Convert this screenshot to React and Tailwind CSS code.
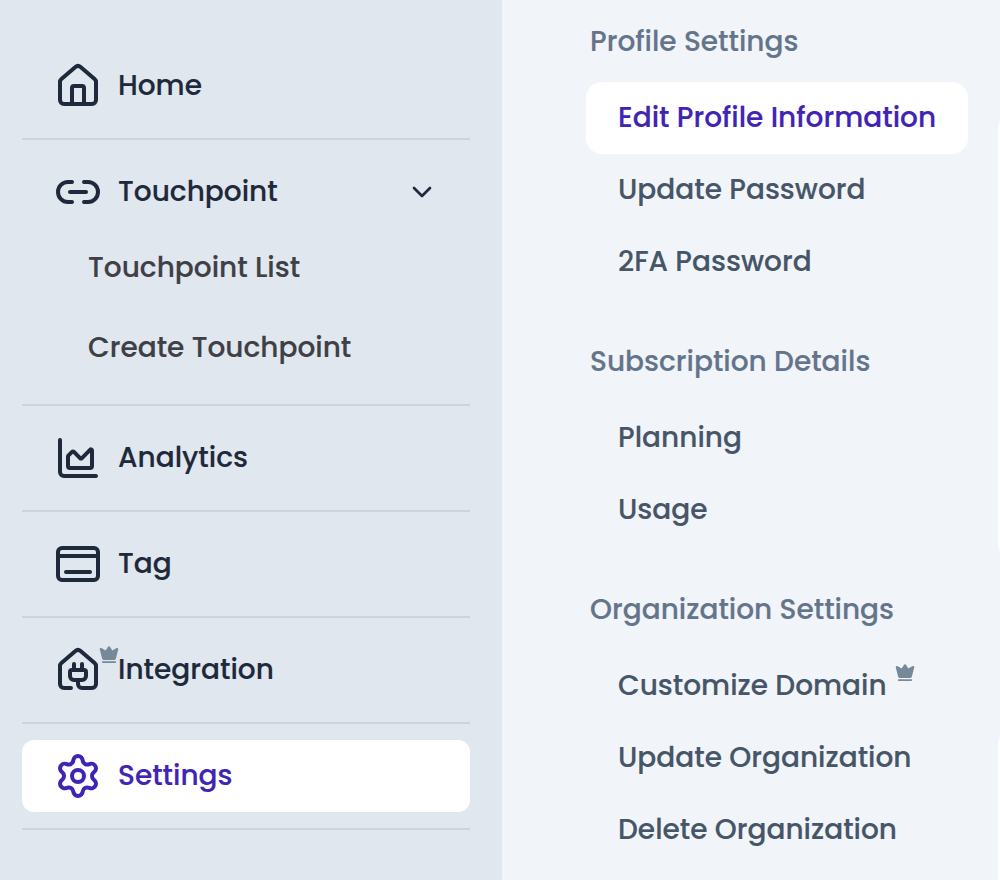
import React from "react";
import { House, Link2, ChartArea, Dock, HousePlug, Settings, ChevronDown } from "lucide-react";

function Crown({ className }) {
  return (
    <svg viewBox="0 0 20 18" className={className} fill="currentColor">
      <path d="M8.7 1.2Q10 -.8 11.3 1.2L13.3 4.6 17.2 2.2Q19.6 1.4 19.2 3.6L16.9 12.6Q16.6 13.9 15.4 13.9H4.6Q3.4 13.9 3.1 12.6L.8 3.6Q.4 1.4 2.8 2.2L6.7 4.6Z" />
      <rect x="2.8" y="15.2" width="14.4" height="1.7" rx=".8" />
    </svg>
  );
}

function NavRow({ icon: Icon, label, active, crown, chevron }) {
  return (
    <div
      className={
        "flex h-[72px] items-center rounded-[12px] pl-8 " +
        (active ? "bg-white text-[#4024b4]" : "text-[#1e293b]")
      }
    >
      <Icon size={48} strokeWidth={2} className="shrink-0" />
      <div className="relative ml-4 flex-1">
        {crown && <Crown className="absolute -left-[19px] -top-[4px] h-[18px] w-5 text-[#778899]" />}
        <span className="whitespace-nowrap">{label}</span>
      </div>
      {chevron && <ChevronDown size={32} className="mr-8" />}
    </div>
  );
}

function Item({ label, active, crown }) {
  return (
    <div
      className={
        "flex h-[72px] items-center rounded-[16px] pl-8 " +
        (active ? "bg-white text-[#4024b4]" : "text-[#475569]")
      }
    >
      <span className="whitespace-nowrap">{label}</span>
      {crown && <Crown className="mb-[26px] ml-2 h-[18px] w-5 text-[#778899]" />}
    </div>
  );
}

function Heading({ label }) {
  return (
    <h2 className="flex h-10 items-center pl-1 text-[#64748b]">
      <span className="whitespace-nowrap">{label}</span>
    </h2>
  );
}

const divider = "border-b-2 border-[#cbd5e1] py-4";

export default function App() {
  return (
    <div className="flex h-[880px] w-[1000px] overflow-hidden bg-[#f1f5f9] font-['Poppins','Inter',sans-serif] text-[28px] font-medium leading-10 [-webkit-text-stroke:0.15px]">
      <nav className="w-[502px] shrink-0 bg-[#e0e7ef] pl-[22px] pr-8 pt-[34px]">
        <div className={divider}><NavRow icon={House} label="Home" /></div>
        <div className={divider}>
          <NavRow icon={Link2} label="Touchpoint" chevron />
          <div className="pl-[66px] text-[#3f3f46]">
            <div className="flex h-20 items-center"><span className="whitespace-nowrap">Touchpoint List</span></div>
            <div className="flex h-20 items-center"><span className="whitespace-nowrap">Create Touchpoint</span></div>
          </div>
        </div>
        <div className={divider}><NavRow icon={ChartArea} label="Analytics" /></div>
        <div className={divider}><NavRow icon={Dock} label="Tag" /></div>
        <div className={divider}><NavRow icon={HousePlug} label="Integration" crown /></div>
        <div className={divider}><NavRow icon={Settings} label="Settings" active /></div>
      </nav>
      <section className="ml-[84px] flex w-[382px] shrink-0 flex-col pt-[22px]">
        <Heading label="Profile Settings" />
        <div className="pb-11 pt-5">
          <Item label="Edit Profile Information" active />
          <Item label="Update Password" />
          <Item label="2FA Password" />
        </div>
        <Heading label="Subscription Details" />
        <div className="pb-11 pt-5">
          <Item label="Planning" />
          <Item label="Usage" />
        </div>
        <Heading label="Organization Settings" />
        <div className="pt-5">
          <Item label="Customize Domain" crown />
          <Item label="Update Organization" />
          <Item label="Delete Organization" />
        </div>
      </section>
      <aside className="ml-[30px] w-5 shrink-0 pt-[106px]">
        <div className="h-[460px] w-40 rounded-[24px] bg-white" />
        <div className="mt-[156px] h-60 w-40 rounded-[24px] bg-white" />
      </aside>
    </div>
  );
}
